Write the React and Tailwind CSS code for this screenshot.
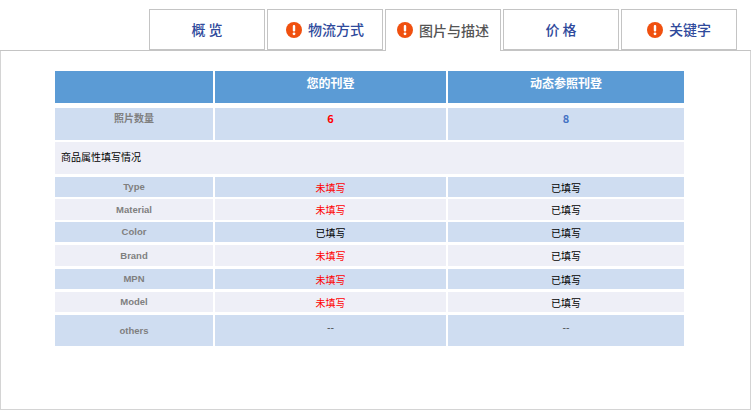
import React from "react";

const cjk = "font-['Microsoft_YaHei','Noto_Sans_CJK_SC','Liberation_Sans',sans-serif]";
const cols = "grid grid-cols-[160px_233px_236px]";
const latinLabel = "font-['Liberation_Sans','Noto_Sans_CJK_SC',sans-serif] text-[9.5px] font-bold text-[#7f7f7f] pt-[1px]";

const tabs = [
  { label: "概 览", warn: false },
  { label: "物流方式", warn: true },
  { label: "图片与描述", warn: true, active: true },
  { label: "价 格", warn: false },
  { label: "关键字", warn: true },
];

const rows = [
  { name: "Type", mine: "未填写", other: "已填写", bg: "bg-[#cfddf1]", box: "h-[20px] mt-[3px]", missing: true },
  { name: "Material", mine: "未填写", other: "已填写", bg: "bg-[#eeeff7]", box: "h-[21px] mt-[2px]", missing: true },
  { name: "Color", mine: "已填写", other: "已填写", bg: "bg-[#cfddf1]", box: "h-[20px] mt-[2px]" },
  { name: "Brand", mine: "未填写", other: "已填写", bg: "bg-[#eeeff7]", box: "h-[21px] mt-[3px]", missing: true },
  { name: "MPN", mine: "未填写", other: "已填写", bg: "bg-[#cfddf1]", box: "h-[20px] mt-[3px]", missing: true },
  { name: "Model", mine: "未填写", other: "已填写", bg: "bg-[#eeeff7]", box: "h-[20px] mt-[3px]", missing: true },
];

const Warn = () => (
  <svg width="16" height="16" viewBox="0 0 16 16" className="shrink-0">
    <circle cx="8" cy="8" r="8" fill="#f0500f" />
    <rect x="6.8" y="3" width="2.4" height="6.5" rx="1" fill="#fff" />
    <circle cx="8" cy="11.8" r="1.4" fill="#fff" />
  </svg>
);

const App = () => {
  return (
    <div className={`w-[751px] h-[410px] bg-white overflow-hidden ${cjk}`}>
      {/* Tabs */}
      <div className="flex justify-end gap-[2px] h-[51px] pt-[9px] pr-[14px] border-b border-[#c4c4c4]">
        {tabs.map((tab, index) => (
          <div
            key={index}
            className={`w-[116px] flex items-center justify-center gap-[6px] text-[14px] font-medium border border-[#c4c4c4] bg-white ${
              tab.active ? "h-[42px] border-b-0 pb-[1px] text-[#555555] relative z-10" : "h-[41px] text-[#2f4a9c]"
            }`}
          >
            {tab.warn && <Warn />}
            <span>{tab.label}</span>
          </div>
        ))}
      </div>

      {/* Panel */}
      <div className="h-[359px] border-x border-b border-[#d4d4d4] pt-[20px] pl-[54px]">
        <div className="w-[629px] flex flex-col">
          <div className={`${cols} h-[32px] bg-[#5b9bd5]`}>
            <div className="border-r-2 border-white" />
            <div className="text-white text-[12px] font-bold text-center leading-[24px] border-r-2 border-white">您的刊登</div>
            <div className="text-white text-[12px] font-bold text-center leading-[24px]">动态参照刊登</div>
          </div>

          <div className={`${cols} h-[32px] mt-[5px] bg-[#cfddf1]`}>
            <div className="text-[10px] font-bold text-[#7f7f7f] text-center pt-[2px] leading-[15px] border-r-2 border-white">照片数量</div>
            <div className="text-[11px] font-bold text-[#ff0000] text-center pt-[3px] leading-[15px] border-r-2 border-white">6</div>
            <div className="text-[11px] font-bold text-[#4472c4] text-center pt-[3px] leading-[15px]">8</div>
          </div>

          <div className="h-[32px] mt-[2px] pb-[3px] bg-[#eeeff7] flex items-center pl-[6px] text-[10px] text-black">商品属性填写情况</div>

          {rows.map((row) => (
            <div key={row.name} className={`${cols} ${row.box} ${row.bg}`}>
              <div className={`flex items-center justify-center border-r-2 border-white ${latinLabel}`}>{row.name}</div>
              <div className={`flex items-center justify-center text-[10px] border-r-2 border-white ${row.missing ? "text-[#ff0000]" : "text-black"}`}>{row.mine}</div>
              <div className="flex items-center justify-center text-[10px] text-black">{row.other}</div>
            </div>
          ))}

          <div className={`${cols} mt-[3px] h-[31px] bg-[#cfddf1]`}>
            <div className={`flex items-center justify-center border-r-2 border-white ${latinLabel}`}>others</div>
            <div className="text-[10px] text-[#333333] text-center pt-[4px] leading-[15px] border-r-2 border-white">--</div>
            <div className="text-[10px] text-[#333333] text-center pt-[4px] leading-[15px]">--</div>
          </div>
        </div>
      </div>
    </div>
  );
};

export default App;
